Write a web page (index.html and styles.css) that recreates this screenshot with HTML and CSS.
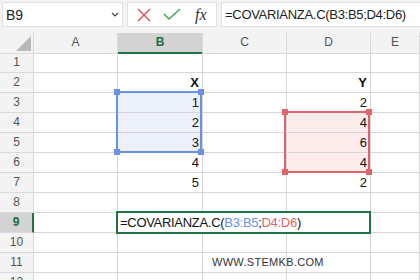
FILE: index.html
```html
<!DOCTYPE html>
<html lang="it">
<head>
    <meta charset="UTF-8">
    <title>COVARIANZA.C</title>
    <link rel="stylesheet" href="styles.css">
</head>
<body>
    <!-- Barra della formula -->
    <div class="topbar">
        <div class="namebox">
            <span>B9</span>
            <svg class="chevron" width="8" height="5" viewBox="0 0 8 5"><polyline points="1,1 4,4 7,1" fill="none" stroke="#444" stroke-width="1.2"/></svg>
        </div>
        <div class="fxbox">
            <svg width="14" height="14" viewBox="0 0 14 14"><path d="M1 1 L13 13 M13 1 L1 13" stroke="#e0484b" stroke-width="1.3"/></svg>
            <svg width="18" height="13" viewBox="0 0 18 13"><polyline points="1,6 6,11 17,1" fill="none" stroke="#2ea44f" stroke-width="1.3"/></svg>
            <span class="fx">fx</span>
        </div>
        <div class="formula">=COVARIANZA.C(B3:B5;D4:D6)</div>
    </div>

    <!-- Foglio -->
    <div class="sheet">
        <div class="row head">
            <div class="corner"></div>
            <div>A</div>
            <div class="sel-col">B</div>
            <div>C</div>
            <div>D</div>
            <div>E</div>
        </div>
        <div class="row"><div class="rh">1</div><div></div><div></div><div></div><div></div><div></div></div>
        <div class="row"><div class="rh">2</div><div></div><div class="num bold">X</div><div></div><div class="num bold">Y</div><div></div></div>
        <div class="row"><div class="rh">3</div><div></div><div class="num blue">1</div><div></div><div class="num">2</div><div></div></div>
        <div class="row"><div class="rh">4</div><div></div><div class="num blue">2</div><div></div><div class="num red">4</div><div></div></div>
        <div class="row"><div class="rh">5</div><div></div><div class="num blue">3</div><div></div><div class="num red">6</div><div></div></div>
        <div class="row"><div class="rh">6</div><div></div><div class="num">4</div><div></div><div class="num red">4</div><div></div></div>
        <div class="row"><div class="rh">7</div><div></div><div class="num">5</div><div></div><div class="num">2</div><div></div></div>
        <div class="row"><div class="rh">8</div><div></div><div></div><div></div><div></div><div></div></div>
        <div class="row"><div class="rh sel-row">9</div><div></div><div></div><div></div><div></div><div></div></div>
        <div class="row"><div class="rh">10</div><div></div><div></div><div></div><div></div><div></div></div>
        <div class="row"><div class="rh">11</div><div></div><div></div><div class="site">WWW.STEMKB.COM</div><div></div><div></div></div>
        <div class="row"><div class="rh">12</div><div></div><div></div><div></div><div></div><div></div></div>

        <div class="range range-blue">
            <i class="h tl"></i><i class="h tr"></i><i class="h bl"></i><i class="h br"></i>
        </div>
        <div class="range range-red">
            <i class="h tl"></i><i class="h tr"></i><i class="h bl"></i><i class="h br"></i>
        </div>
        <div class="active">=COVARIANZA.C(<span class="ref-b">B3:B5</span>;<span class="ref-d">D4:D6</span>)</div>
    </div>
</body>
</html>
```

FILE: styles.css
```css
* {
    margin: 0;
    padding: 0;
    box-sizing: border-box;
}

body, html {
    font-family: "Liberation Sans", Arial, sans-serif;
    background: #fff;
    width: 420px;
    height: 280px;
    overflow: hidden;
}

/* barra superiore */
.topbar {
    height: 33px;
    background: #f3f3f3;
    display: flex;
    gap: 4px;
    padding: 2px 0 0 2px;
}

.namebox,
.fxbox,
.formula {
    height: 25px;
    background: #fff;
    border: 1px solid #e1e1e1;
    display: flex;
    align-items: center;
}

.namebox {
    width: 121px;
    justify-content: space-between;
    padding: 0 3px 0 3px;
    font-size: 14px;
    color: #222;
}

.fxbox {
    width: 90px;
    padding-left: 9px;
    gap: 12px;
}

.fx {
    font-family: "Liberation Serif", serif;
    font-style: italic;
    font-size: 16px;
    color: #333;
    margin-left: 2px;
}

.formula {
    flex: 1;
    padding-left: 3px;
    border-right: none;
    font-size: 13px;
    letter-spacing: -0.3px;
    color: #222;
}

/* griglia */
.sheet {
    position: relative;
}

.row {
    display: grid;
    grid-template-columns: 34px 84px 85px 84px 84px 1fr;
    height: 20px;
}

.row > div {
    border-right: 1px solid #d6d6d6;
    border-bottom: 1px solid #d6d6d6;
    font-size: 13px;
    line-height: 19px;
    color: #111;
    white-space: nowrap;
}

.head > div {
    background: #f3f3f3;
    text-align: center;
    color: #555;
    font-size: 12px;
    border-color: #dadada;
}

.corner {
    position: relative;
}

.corner::after {
    content: "";
    position: absolute;
    right: 2px;
    bottom: 2px;
    width: 0;
    height: 0;
    border-left: 15px solid transparent;
    border-bottom: 15px solid #b9b9b9;
}

.head > .sel-col {
    background: #d3d3d3;
    color: #1e6b41;
    font-weight: bold;
    border-bottom: 2px solid #217346;
}

.row > .rh {
    background: #f3f3f3;
    text-align: center;
    color: #555;
    font-size: 12px;
    border-color: #dadada;
}

.row > .sel-row {
    background: #d3d3d3;
    color: #1e6b41;
    font-weight: bold;
    border-right: 2px solid #217346;
}

.num {
    text-align: right;
    padding-right: 3px;
}

.bold {
    font-weight: bold;
}

.row > .blue {
    background: #ebf0fb;
}

.row > .red {
    background: #fcecec;
}

.row > .site {
    overflow: visible;
    padding-left: 9px;
    font-size: 11px;
    letter-spacing: 0.3px;
    color: #333;
}

/* riferimenti evidenziati */
.range {
    position: absolute;
    width: 86px;
    height: 62px;
    border: 2px solid;
}

.range-blue {
    left: 116px;
    top: 58px;
    border-color: #6a90e8;
}

.range-red {
    left: 284px;
    top: 78px;
    border-color: #e3636a;
}

.h {
    position: absolute;
    width: 6px;
    height: 6px;
    background: inherit;
}

.range-blue .h { background: #6a90e8; }
.range-red .h { background: #e3636a; }

.tl { left: -4px; top: -4px; }
.tr { right: -4px; top: -4px; }
.bl { left: -4px; bottom: -4px; }
.br { right: -4px; bottom: -4px; }

.active {
    position: absolute;
    left: 116px;
    top: 178px;
    width: 255px;
    height: 23px;
    border: 2px solid #217346;
    background: #fff;
    padding-left: 2px;
    font-size: 13px;
    line-height: 19px;
    letter-spacing: -0.3px;
    color: #111;
}

.ref-b { color: #6a90e8; }
.ref-d { color: #e3636a; }
```
